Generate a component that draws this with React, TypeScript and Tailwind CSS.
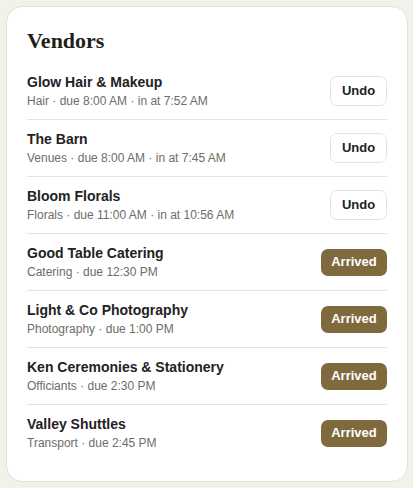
const vendors = [
  { name: "Glow Hair & Makeup", meta: "Hair · due 8:00 AM · in at 7:52 AM", arrived: true },
  { name: "The Barn", meta: "Venues · due 8:00 AM · in at 7:45 AM", arrived: true },
  { name: "Bloom Florals", meta: "Florals · due 11:00 AM · in at 10:56 AM", arrived: true },
  { name: "Good Table Catering", meta: "Catering · due 12:30 PM", arrived: false },
  { name: "Light & Co Photography", meta: "Photography · due 1:00 PM", arrived: false },
  { name: "Ken Ceremonies & Stationery", meta: "Officiants · due 2:30 PM", arrived: false },
  { name: "Valley Shuttles", meta: "Transport · due 2:45 PM", arrived: false },
];

export default function App() {
  return (
    <div className="min-h-[488px] bg-[#f3f2ea] pt-[6px] pl-[6px] pr-[5px]" style={{ fontFamily: '"Liberation Sans", Arial, sans-serif' }}>
      <div className="rounded-[16px] border border-[#e4e1d6] bg-white p-5">
        <h2
          className="text-[22px] leading-[28px] font-bold text-[#221f1a] mb-[8px]"
          style={{ fontFamily: '"Liberation Serif", serif' }}
        >
          Vendors
        </h2>
        <div className="flex flex-col">
          {vendors.map((v, i) => (
            <div
              key={v.name}
              className={`flex items-center justify-between py-[9px] ${i < vendors.length - 1 ? "border-b border-[#e7e4dc]" : ""}`}
            >
              <div className="flex flex-col">
                <span className="text-[14px] leading-[20px] font-bold text-[#222222]">{v.name}</span>
                <span className="text-[12px] leading-[18px] text-[#6f6c66]">{v.meta}</span>
              </div>
              {v.arrived ? (
                <button className="h-[30px] w-[57px] rounded-[7px] border border-[#e5e2da] bg-white text-[13px] font-bold text-[#222222]">
                  Undo
                </button>
              ) : (
                <button className="h-[27px] w-[66px] rounded-[7px] bg-[#7f6a3e] text-[13px] font-bold text-white">
                  Arrived
                </button>
              )}
            </div>
          ))}
        </div>
      </div>
    </div>
  );
}
